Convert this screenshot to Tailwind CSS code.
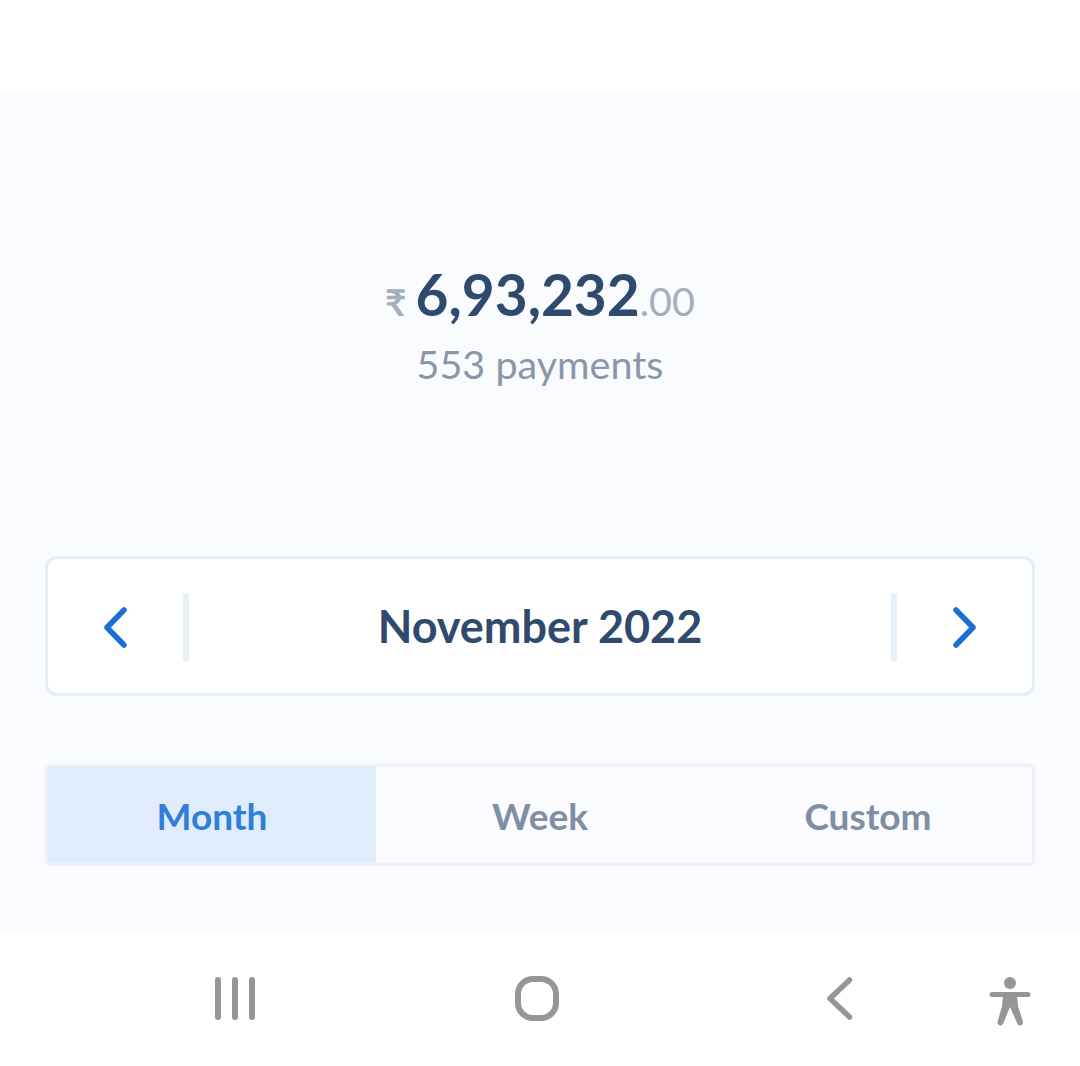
<!DOCTYPE html>
<html>
<head>
<meta charset="utf-8">
<script src="https://cdn.jsdelivr.net/npm/@tailwindcss/browser@4"></script>
</head>
<body class="m-0 bg-white font-['Lato',sans-serif]">
<div class="w-[1080px] h-[1066px] flex flex-col overflow-hidden bg-white">
  <div class="h-[91px] shrink-0 bg-white"></div>
  <main class="h-[842px] shrink-0 bg-[#f9fbfe] flex flex-col px-[45px]">
    <div class="h-[465px] shrink-0 flex flex-col items-center pt-[171px]">
      <div class="h-[64px] flex items-baseline leading-[64px]">
        <span class="text-[37px] font-bold text-[#a3afbd] mr-[9px]">₹</span>
        <span class="text-[56.800px] font-bold text-[#304a6e]">6,93,232</span>
        <span class="text-[39.500px] font-normal text-[#a3afbd]">.00</span>
      </div>
      <div class="mt-[15px] text-[39.500px] leading-[46px] text-[#8a97a8]">553 payments</div>
    </div>
    <div class="h-[140px] shrink-0 flex items-center bg-white border-[3px] border-[#e4eef7] rounded-[12px]">
      <button class="w-[135px] h-full shrink-0 flex items-center justify-center pl-[1px] pt-[4px]">
        <svg width="28" height="42" viewBox="0 0 28 42" fill="none" stroke="#1a6fd4" stroke-width="5.5" stroke-linecap="round" stroke-linejoin="round"><path d="M22 3 L5 20.500 L22 38"/></svg>
      </button>
      <div class="w-[6px] h-[68px] mt-[1px] shrink-0 bg-[#e8f0fa]"></div>
      <div class="flex-1 text-center text-[45px] font-bold leading-none text-[#304a6e]">November 2022</div>
      <div class="w-[6px] h-[68px] mt-[1px] shrink-0 bg-[#e8f0fa]"></div>
      <button class="w-[135px] h-full shrink-0 flex items-center justify-center pr-[2px] pt-[4px]">
        <svg width="28" height="42" viewBox="0 0 28 42" fill="none" stroke="#1a6fd4" stroke-width="5.5" stroke-linecap="round" stroke-linejoin="round"><path d="M6 3 L23 20.500 L6 38"/></svg>
      </button>
    </div>
    <div class="mt-[68px] h-[102px] shrink-0 grid grid-cols-3 border-[3px] border-[#eef2f7] rounded-[6px] text-[37px] font-bold leading-none">
      <div class="flex items-center justify-center bg-[#e0ecfc] text-[#2f7fd9]">Month</div>
      <div class="flex items-center justify-center text-[#7f8ea3]">Week</div>
      <div class="flex items-center justify-center text-[#7f8ea3]">Custom</div>
    </div>
  </main>
  <nav class="flex-1 relative bg-white">
    <svg class="absolute left-[213px] top-[43px]" width="44" height="46" viewBox="0 0 44 46" fill="none" stroke="#969696" stroke-width="6" stroke-linecap="round"><path d="M5 4 V41 M22 4 V41 M39 4 V41"/></svg>
    <svg class="absolute left-[513px] top-[41px]" width="48" height="48" viewBox="0 0 48 48" fill="none" stroke="#969696" stroke-width="6"><rect x="5" y="5" width="38" height="39" rx="15"/></svg>
    <svg class="absolute left-[824px] top-[42px]" width="32" height="46" viewBox="0 0 32 46" fill="none" stroke="#969696" stroke-width="5.5" stroke-linecap="round" stroke-linejoin="round"><path d="M25.500 5 L6 23.500 L25.500 42"/></svg>
    <svg class="absolute left-[988px] top-[43px]" width="44" height="50" viewBox="0 0 44 50" fill="#969696">
      <circle cx="22" cy="7" r="6"/>
      <path d="M4 16 H40 A2.500 2.500 0 0 1 40 21 H29 L30 30 L35 46 A3 3 0 0 1 29.500 48 L22 31 L15 48 A3 3 0 0 1 9.500 46 L14 30 L15 21 H4 A2.500 2.500 0 0 1 4 16 Z"/>
    </svg>
  </nav>
</div>
</body>
</html>
